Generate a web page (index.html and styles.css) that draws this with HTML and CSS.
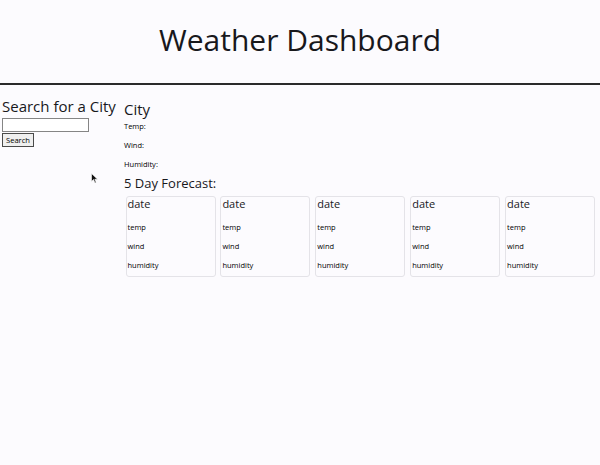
FILE: index.html
```html
<!DOCTYPE html>
<html lang="en">
<head>
<meta charset="utf-8">
<title>Weather Dashboard</title>
<link rel="stylesheet" href="styles.css">
</head>
<body>
<header class="site-header">
  <h1 class="title">Weather Dashboard</h1>
</header>
<main class="layout">
  <aside class="search">
    <h2 class="search-title">Search for a City</h2>
    <input class="search-input" type="text">
    <button class="search-btn" type="button">Search</button>
  </aside>
  <section class="weather">
    <h2 class="city">City</h2>
    <p class="stat">Temp:</p>
    <p class="stat">Wind:</p>
    <p class="stat">Humidity:</p>
    <h3 class="forecast-title">5 Day Forecast:</h3>
    <div class="forecast">
      <div class="card"><h4 class="card-date">date</h4><p class="card-line">temp</p><p class="card-line">wind</p><p class="card-line">humidity</p></div>
      <div class="card"><h4 class="card-date">date</h4><p class="card-line">temp</p><p class="card-line">wind</p><p class="card-line">humidity</p></div>
      <div class="card"><h4 class="card-date">date</h4><p class="card-line">temp</p><p class="card-line">wind</p><p class="card-line">humidity</p></div>
      <div class="card"><h4 class="card-date">date</h4><p class="card-line">temp</p><p class="card-line">wind</p><p class="card-line">humidity</p></div>
      <div class="card"><h4 class="card-date">date</h4><p class="card-line">temp</p><p class="card-line">wind</p><p class="card-line">humidity</p></div>
    </div>
  </section>
</main>
<svg class="cursor" width="8" height="11" viewBox="0 0 8 11"><path d="M0.5 0.5 L0.5 8.5 L2.5 6.5 L4 10 L5.2 9.5 L3.8 6.2 L6.5 6.2 Z" fill="#111" stroke="#fff" stroke-width="0.6"/></svg>
</body>
</html>
```

FILE: styles.css
```css
html, body {
  margin: 0;
  padding: 0;
}
body {
  background: #fcfbfe;
  color: #18181c;
  font-family: "Open Sans", "Noto Sans", sans-serif;
  position: relative;
  min-height: 465px;
}
.site-header {
  padding: 19px 0 23px;
  border-bottom: 2px solid #2a2a2a;
  text-align: center;
}
.title {
  margin: 0;
  font-size: 30px;
  line-height: 41px;
  font-weight: 400;
}
.layout {
  display: flex;
  padding-left: 2px;
}
.search {
  width: 122px;
  flex: none;
  display: flex;
  flex-direction: column;
  align-items: flex-start;
  padding-top: 11px;
}
.search-title {
  margin: 0 0 1.6px;
  font-size: 15px;
  line-height: 20.4px;
  font-weight: 400;
}
.search-input {
  box-sizing: border-box;
  width: 87px;
  height: 14px;
  margin: 0;
  padding: 0 2px;
  border: 1px solid #858585;
  background: #fff;
  font-size: 7.4px;
}
.search-btn {
  box-sizing: border-box;
  height: 13.5px;
  width: 32px;
  margin: 1px 0 0;
  padding: 0;
  border: 1px solid #4a4a4a;
  border-radius: 0;
  background: #efefef;
  color: #000;
  font-family: "Open Sans", "Noto Sans", sans-serif;
  font-size: 7.6px;
  line-height: 10px;
}
.weather {
  flex: 1;
  padding-top: 14px;
}
.city {
  margin: 0 0 1.7px;
  font-size: 15px;
  line-height: 20.4px;
  font-weight: 400;
}
.stat {
  margin: 0 0 8.8px;
  font-size: 7.5px;
  line-height: 10px;
  color: #000;
}
.stat:last-of-type {
  margin-bottom: 6.5px;
}
.forecast-title {
  margin: 0 0 3.2px;
  font-size: 13px;
  line-height: 17.7px;
  font-weight: 400;
}
.forecast {
  display: flex;
  gap: 4.9px;
  margin-left: 1.5px;
}
.card {
  box-sizing: border-box;
  width: 90px;
  height: 81px;
  border: 1px solid #e4e3e8;
  border-radius: 3px;
  padding-left: 1px;
}
.card-date {
  margin: 0 0 11px;
  font-size: 11px;
  line-height: 14px;
  font-weight: 400;
}
.card-line {
  margin: 0 0 9px;
  font-size: 7.5px;
  line-height: 10px;
  color: #000;
}
.cursor {
  position: absolute;
  left: 91px;
  top: 173px;
}
```
